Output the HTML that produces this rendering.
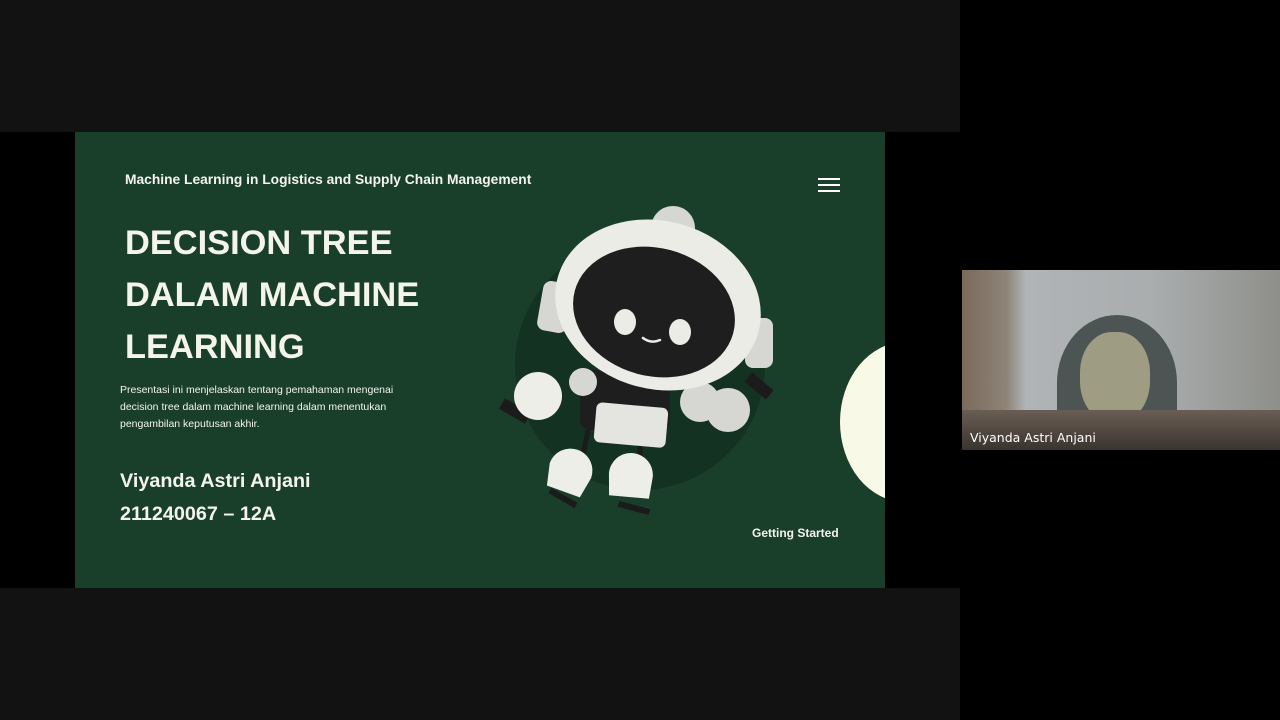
<html><head><style>
body{margin:0;width:1280px;height:720px;background:#000;position:relative;overflow:hidden;font-family:"Liberation Sans",sans-serif}
.top{position:absolute;left:0;top:0;width:960px;height:132px;background:#121212}
.bot{position:absolute;left:0;top:588px;width:960px;height:132px;background:#121212}
.slide{position:absolute;left:75px;top:132px;width:810px;height:456px;background:#193f2a;overflow:hidden;color:#f4f4ea}
.t{position:absolute;white-space:nowrap}
</style></head><body>
<div class="top"></div><div class="bot"></div>
<div class="slide">
<div class="t" style="left:50px;top:40px;font-size:13.8px;font-weight:bold">Machine Learning in Logistics and Supply Chain Management</div>
<div style="position:absolute;left:743px;top:46px;width:22px;height:2px;background:#fff;box-shadow:0 6px 0 #fff,0 12px 0 #fff"></div>
<div class="t" style="left:50px;top:85px;font-size:34.4px;font-weight:bold;line-height:52px">DECISION TREE<br>DALAM MACHINE<br>LEARNING</div>
<div class="t" style="left:45px;top:250px;font-size:10.5px;line-height:17px">Presentasi ini menjelaskan tentang pemahaman mengenai<br>decision tree dalam machine learning dalam menentukan<br>pengambilan keputusan akhir.</div>
<div class="t" style="left:45px;top:333px;font-size:19.8px;font-weight:bold;line-height:33px">Viyanda Astri Anjani<br>211240067 – 12A</div>
<div class="t" style="left:677px;top:394px;font-size:12px;font-weight:bold">Getting Started</div>
<div style="position:absolute;left:765px;top:210px;width:130px;height:160px;border-radius:50%;background:#f8f9e6"></div>
<svg style="position:absolute;left:0;top:0" width="810" height="456" viewBox="75 132 810 456">
<circle cx="640" cy="365" r="125" fill="#133222"/>
<rect x="500" y="405" width="30" height="12" fill="#1b1b1b" transform="rotate(30 515 411)"/>
<rect x="745" y="380" width="28" height="12" fill="#1b1b1b" transform="rotate(40 759 386)"/>
<path d="M590 420 L580 470 M640 425 L640 470" stroke="#1b1b1b" stroke-width="5"/>
<rect x="580" y="370" width="90" height="60" rx="10" fill="#1e1e1e"/>
<rect x="595" y="405" width="72" height="40" rx="6" fill="#e4e4e0" transform="rotate(5 630 425)"/>
<circle cx="583" cy="382" r="14" fill="#d6d7d3"/>
<circle cx="700" cy="402" r="20" fill="#d6d7d3"/>
<circle cx="728" cy="410" r="22" fill="#d6d7d3"/>
<circle cx="538" cy="396" r="24" fill="#eeeee9"/>
<circle cx="673" cy="228" r="22" fill="#d6d7d3"/>
<rect x="540" y="282" width="30" height="50" rx="8" fill="#d6d7d3" transform="rotate(10 555 307)"/>
<rect x="745" y="318" width="28" height="50" rx="8" fill="#d6d7d3"/>
<ellipse cx="658" cy="305" rx="104" ry="84" fill="#ececE7" transform="rotate(15 658 305)"/>
<ellipse cx="654" cy="312" rx="82" ry="64" fill="#1e1e1e" transform="rotate(15 654 312)"/>
<ellipse cx="625" cy="322" rx="11" ry="13" fill="#ececE7"/>
<ellipse cx="680" cy="332" rx="11" ry="13" fill="#ececE7"/>
<path d="M643 338 q8 6 17 2" stroke="#ececE7" stroke-width="2.5" fill="none" stroke-linecap="round"/>
<path d="M545 470 a22 22 0 0 1 44 0 l-4 22 l-35 0 z" fill="#eeeee9" transform="rotate(20 567 480)"/>
<path d="M608 475 a22 22 0 0 1 44 0 l-2 22 l-40 0 z" fill="#eeeee9" transform="rotate(5 630 485)"/>
<rect x="548" y="495" width="30" height="6" fill="#1b1b1b" transform="rotate(30 563 498)"/>
<rect x="618" y="505" width="32" height="6" fill="#1b1b1b" transform="rotate(15 634 508)"/>
</svg>
</div>
<div style="position:absolute;left:962px;top:270px;width:318px;height:180px;background:linear-gradient(90deg,#7a6a5a 0,#8e8478 14%,#b0b4b6 20%,#a9adae 60%,#8e8f8a 100%)">
<div style="position:absolute;left:95px;top:45px;width:120px;height:135px;border-radius:50% 50% 10% 10%;background:#4d5454"></div>
<div style="position:absolute;left:118px;top:62px;width:70px;height:90px;border-radius:45%;background:#9e9c83"></div>
<div style="position:absolute;left:0;top:140px;width:318px;height:40px;background:linear-gradient(#6a5e54,#3a342f)"></div>
<div class="t" style="left:8px;top:160px;font-size:12.5px;color:#fff;font-family:'DejaVu Sans',sans-serif">Viyanda Astri Anjani</div>
</div>
</body></html>
